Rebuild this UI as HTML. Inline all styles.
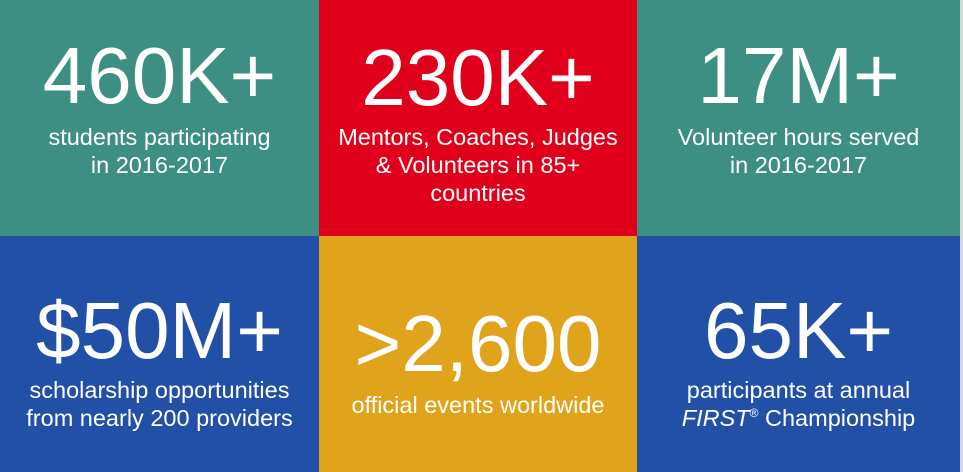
<!DOCTYPE html>
<html><head><style>
*{margin:0;padding:0}
body{width:963px;height:472px;position:relative;background:#d9d9d9;font-family:"Liberation Sans",Arial,sans-serif;color:#fff;overflow:hidden}
.c{position:absolute;overflow:hidden}
.b{position:absolute;left:0;right:0;text-align:center;font-size:80px;line-height:76px}
.s{position:absolute;left:0;right:0;text-align:center;font-size:23.5px;line-height:28px}
sup{font-size:12px;line-height:0;vertical-align:9px}
</style></head><body>
<div class="c" style="left:0;top:0;width:319px;height:236px;background:#3e8f83">
<div class="b" style="top:38px">460K+</div>
<div class="s" style="top:123px">students participating<br>in 2016-2017</div></div>
<div class="c" style="left:319px;top:0;width:318px;height:236px;background:#e0001b">
<div class="b" style="top:40px">230K+</div>
<div class="s" style="top:123px">Mentors, Coaches, Judges<br>&amp; Volunteers in 85+<br>countries</div></div>
<div class="c" style="left:637px;top:0;width:323px;height:236px;background:#3e8f83">
<div class="b" style="top:38px">17M+</div>
<div class="s" style="top:123px">Volunteer hours served<br>in 2016-2017</div></div>
<div class="c" style="left:0;top:236px;width:319px;height:236px;background:#2150a6">
<div class="b" style="top:57px">$50M+</div>
<div class="s" style="top:140px">scholarship opportunities<br>from nearly 200 providers</div></div>
<div class="c" style="left:319px;top:236px;width:318px;height:236px;background:#e0a31c">
<div class="b" style="top:70px">&gt;2,600</div>
<div class="s" style="top:155px">official events worldwide</div></div>
<div class="c" style="left:637px;top:236px;width:323px;height:236px;background:#2150a6">
<div class="b" style="top:57px">65K+</div>
<div class="s" style="top:140px">participants at annual<br><i>FIRST</i><sup>®</sup> Championship</div></div>
</body></html>
